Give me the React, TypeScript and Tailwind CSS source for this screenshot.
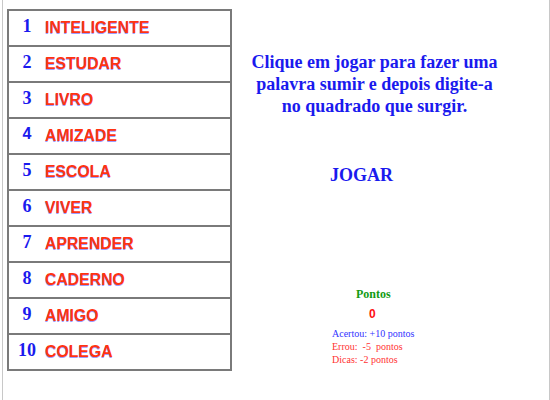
const words = [
  "INTELIGENTE",
  "ESTUDAR",
  "LIVRO",
  "AMIZADE",
  "ESCOLA",
  "VIVER",
  "APRENDER",
  "CADERNO",
  "AMIGO",
  "COLEGA",
];

const serif = "font-['Liberation_Serif',serif]";
const sans = "font-['Liberation_Sans',sans-serif]";

export default function App() {
  return (
    <div className="w-[550px] h-[400px] bg-white overflow-hidden">
      <div className="ml-[2px] w-[548px] h-[400px] border-x border-[#c8c8c8] flex">
        <div className="ml-[4px] mt-[9px] w-[225px] h-[362px] border-2 border-[#7a7a7a] flex flex-col">
          {words.map((w, i) => (
            <div
              key={w}
              className={`flex-1 flex items-center ${i > 0 ? "border-t-2 border-[#7a7a7a]" : ""}`}
            >
              <span
                className={`${i === 3 ? `${sans} text-[16px]` : `${serif} text-[18px]`} w-[36px] text-center pb-[4px] font-bold text-[#1a1aee]`}
              >
                {i + 1}
              </span>
              <span
                className={`${sans} text-[15.8px] font-bold text-[#ff3311] [text-shadow:-0.5px_1px_0_rgba(70,70,255,0.55)]`}
              >
                {w}
              </span>
            </div>
          ))}
        </div>
        <div className="flex-1 flex flex-col">
          <p
            className={`${serif} mt-[51px] mr-[32px] text-center text-[18px] leading-[22px] font-bold text-[#1a1aee]`}
          >
            Clique em jogar para fazer uma
            <br />
            palavra sumir e depois digite-a
            <br />
            no quadrado que surgir.
          </p>
          <button
            className={`${serif} mt-[45px] mr-[58px] self-center text-[18px] font-bold text-[#1a1aee] cursor-pointer`}
          >
            JOGAR
          </button>
          <div className="mt-[96px] ml-[100px] flex flex-col">
            <span className={`${serif} ml-[24px] text-[12px] font-bold text-[#139a13]`}>Pontos</span>
            <span className={`${sans} ml-[37px] mt-[2px] text-[12px] font-bold text-[#ff1111]`}>0</span>
            <div className={`${serif} mt-[4px] text-[10px] leading-[13px]`}>
              <div className="text-[#3333ff]">Acertou: +10 pontos</div>
              <div className="text-[#ff3333] whitespace-pre">Errou:  -5  pontos</div>
              <div className="text-[#ff3333]">Dicas: -2 pontos</div>
            </div>
          </div>
        </div>
      </div>
    </div>
  );
}
